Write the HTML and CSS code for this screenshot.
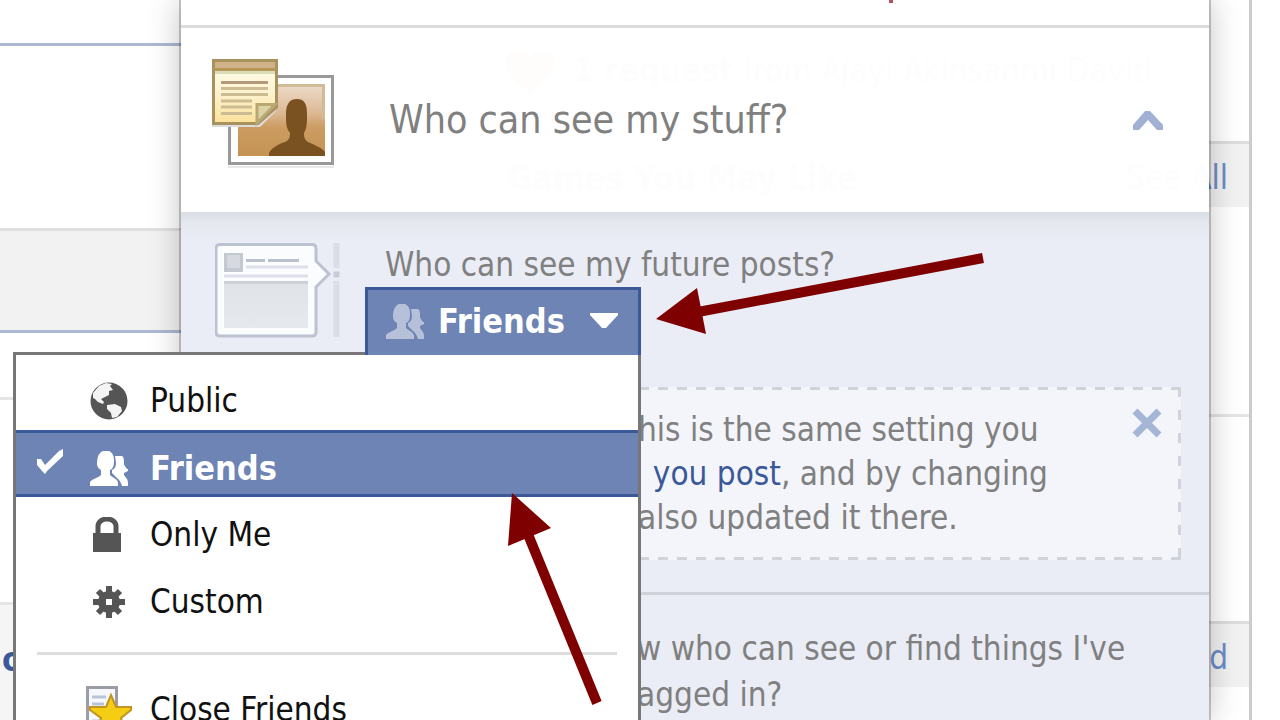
FILE: index.html
```html
<!DOCTYPE html>
<html lang="en">
<head>
  <meta charset="UTF-8" />
  <title>Privacy Shortcuts</title>
  <link rel="stylesheet" href="styles.css">
</head>
<body>
  <svg class="sprite" aria-hidden="true">
    <symbol id="people" viewBox="0 0 38 38">
      <path d="M0 37v-4c2-3 8-4 11-7v-5c-2-1-4-3-4-6 0-8 2-11 6-13h6c4 2 5 5 5 10 0 5-1 8-4 9v5c3 3 8 4 8 8v3z"/>
      <path d="M25 7h7c2 1 2 4 2 8 0 2 2 3 3 5h1v2l-4 2v2c2 3 4 4 4 8v3h-6c-1-3-2-6-5-8l-5-5v-3c3-1 4-4 4-7z"/>
    </symbol>
  </svg>

  <div class="page">
    <div class="left-col">
      <div class="box box-input"></div>
      <div class="box box-blank"></div>
      <div class="box box-bar"></div>
      <div class="box box-gap"></div>
      <div class="box box-story"></div>
      <div class="box box-link"><a href="#">o</a></div>
    </div>
    <div class="right-col">
      <div class="request">
        <svg class="heart" viewBox="0 0 50 44"><path d="M25 44C10 32 0 24 0 13 0 2 17-4 25 8 33-4 50 2 50 13c0 11-10 19-25 31z" fill="#f0a070"/></svg>
        <span><b>1 request</b> from Ajayi Akinsanmi David</span>
      </div>
      <div class="rail-head"><b>Games You May Like</b><a href="#">See All</a></div>
      <div class="rail-item"></div>
      <div class="rail-item"></div>
      <div class="rail-head"><b></b><a href="#">Find</a></div>
    </div>
  </div>

  <div class="panel">
    <div class="panel-top"><span class="alert-mark"></span></div>

    <div class="panel-head">
      <svg class="stuff-icon" viewBox="0 0 122 110">
        <defs>
          <linearGradient id="photo" x1="0" y1="0" x2="0" y2="1">
            <stop offset="0" stop-color="#eedccb"/><stop offset=".4" stop-color="#dcb995"/><stop offset=".6" stop-color="#cc9c62"/><stop offset="1" stop-color="#c49353"/>
          </linearGradient>
          <linearGradient id="paper" x1="0" y1="0" x2="0" y2="1">
            <stop offset="0" stop-color="#fffef0"/><stop offset=".5" stop-color="#fdf3cf"/><stop offset="1" stop-color="#fbe29a"/>
          </linearGradient>
        </defs>
        <rect x="16" y="107" width="106" height="2" fill="#e8e8e8"/>
        <rect x="17.500" y="17.500" width="103" height="87" fill="#fff" stroke="#999" stroke-width="3"/>
        <rect x="26" y="25" width="87" height="72" fill="url(#photo)"/>
        <path d="M26 26.500h85.500V60" fill="none" stroke="#d0bd98" stroke-width="3"/>
        <path d="M57 97v-3c2-5 10-9 16-11 4-2 5-4 5-9-4-5-4-10-4-19 0-9 3-15 11-15s10 6 10 15c0 9 0 14-3 19 0 5 1 7 4 9 7 3 14 6 17 10v4z" fill="#7a5120"/>
        <path d="M0 66h46l18-17v3L48 68H0z" fill="#ddd"/>
        <path d="M1.500 1.500h63V48L46 64.500H1.500z" fill="url(#paper)" stroke="#a8935f" stroke-width="3"/>
        <rect x="3" y="3" width="60" height="6" fill="#d0b189"/>
        <rect x="3" y="9" width="60" height="3" fill="#b59a55"/>
        <rect x="3" y="12" width="60" height="3" fill="#dcdcb8"/>
        <rect x="9" y="22" width="47" height="3" fill="#b5977c"/>
        <path d="M9 29.500h47M9 35.500h47M9 42h31M9 48h31M9 54.500h31" stroke="#cdbb94" stroke-width="3"/>
        <path d="M45 64V45.500h18z" fill="#ddd2a4" stroke="#b9a873" stroke-width="3"/>
      </svg>
      <h2>Who can see my stuff?</h2>
      <button class="icon-btn" aria-label="Collapse">
        <svg width="30" height="20" viewBox="0 0 30 20"><path d="M0 20v-5L12 1h5l13 14v5h-6l-9-10-9 10z" fill="#a1b1d3"/></svg>
      </button>
    </div>

    <div class="setting setting-posts">
      <svg class="post-icon" viewBox="0 0 125 95">
        <defs>
          <linearGradient id="shot" x1="0" y1="0" x2="0" y2="1">
            <stop offset="0" stop-color="#dfe2e7"/><stop offset="1" stop-color="#e6e9ee"/>
          </linearGradient>
        </defs>
        <path d="M5 1.500h92q4 0 4 4V18l13 13-13 13v45q0 4-4 4H5q-4 0-4-4V5.500q0-4 4-4z" fill="#fbfcfe" stroke="#bcc2d0" stroke-width="3"/>
        <rect x="9" y="10" width="19" height="19" fill="#c3c8d1"/>
        <rect x="12" y="12" width="13" height="13" fill="#d6dae0"/>
        <path d="M31 17.500h19M53 17.500h31" stroke="#bcc2cd" stroke-width="3"/>
        <path d="M31 24h62M9 33h84" stroke="#dde0e8" stroke-width="3"/>
        <rect x="9" y="38" width="84" height="47" fill="url(#shot)"/>
        <path d="M9 39.500h84" stroke="#cdd0d6" stroke-width="3"/>
        <path d="M121.500 0v25M121.500 38v56" stroke="#dadee8" stroke-width="6"/>
        <path d="M121.500 28.500v6" stroke="#c8ccd6" stroke-width="6"/>
      </svg>
      <div class="setting-body">
        <p class="question">Who can see my future posts?</p>

        <div class="dropdown">
          <button class="dropdown-btn" aria-haspopup="true" aria-expanded="true">
            <svg class="people" width="38" height="38"><use href="#people"/></svg>
            <span>Friends</span>
            <svg class="caret" width="28" height="16" viewBox="0 0 28 16"><path d="M0 0h28v2L16 15h-4L0 2z"/></svg>
          </button>
          <ul class="menu">
            <li>
              <button>
                <span class="check"></span>
                <span class="icon"><svg width="38" height="38" viewBox="0 0 38 38">
                  <circle cx="19" cy="19" r="18.500" fill="#555"/>
                  <path d="M9 4l7-3 6 1-2 2 3 4-4 1 0 4-4 2-4 2 3 3-1 2-5-2-3-3-2-1 0-5z" fill="#f4f4f4"/>
                  <path d="M17 23l8-1 6 3 1 4-5 6-5 1-1-5-4-4z" fill="#f4f4f4"/>
                </svg></span>
                <span>Public</span>
              </button>
            </li>
            <li class="selected">
              <button>
                <span class="check"><svg width="26" height="26" viewBox="0 0 26 26"><path d="M0 10h4l4 6L22 2l4-2v7L10 22l-2 3-3-3-5-6z" fill="#fff"/></svg></span>
                <span class="icon"><svg width="38" height="38" fill="#fff"><use href="#people"/></svg></span>
                <span>Friends</span>
              </button>
            </li>
            <li>
              <button>
                <span class="check"></span>
                <span class="icon"><svg width="34" height="36" viewBox="0 0 34 36">
                  <path d="M1 16h28v19H1z" fill="#555"/><path d="M6 17V9c0-4 4-7 9-7s9 3 9 7v8" fill="none" stroke="#555" stroke-width="5"/>
                </svg></span>
                <span>Only Me</span>
              </button>
            </li>
            <li>
              <button>
                <span class="check"></span>
                <span class="icon"><svg width="32" height="32" viewBox="0 0 32 32">
                  <path d="M16 0v32M0 16h32M5 5l22 22M27 5L5 27" stroke="#555" stroke-width="6"/><circle cx="16" cy="16" r="11" fill="#555"/><rect x="13" y="13" width="6" height="6" fill="#fff"/>
                </svg></span>
                <span>Custom</span>
              </button>
            </li>
            <li class="divider"></li>
            <li>
              <button>
                <span class="check"></span>
                <span class="icon"><svg width="46" height="48" viewBox="0 0 46 48">
                  <path d="M1.500 1.500h29v44h-29z" fill="#f7f8fb" stroke="#9a9da5" stroke-width="3"/>
                  <path d="M6 11h14M6 18h12M6 35h8" stroke="#b9c3da" stroke-width="3"/>
                  <path d="M25 9l5 12h15v3L35 32l5 15-15-9-14 9 4-15L4 24v-3h16z" fill="#f5cd12" stroke="#c29420" stroke-width="2"/>
                </svg></span>
                <span>Close Friends</span>
              </button>
            </li>
          </ul>
        </div>

        <div class="note">
          <p>his is the same setting you<br>&ensp;<a href="#">you post</a>, and by changing<br>also updated it there.</p>
          <button class="icon-btn" aria-label="Dismiss">
            <svg width="30" height="30" viewBox="0 0 30 30"><path d="M3 3l24 24M27 3L3 27" stroke="#a5b5d5" stroke-width="7"/></svg>
          </button>
        </div>
      </div>
    </div>

    <div class="setting setting-review">
      <p>w who can see or find things I've<br>agged in?</p>
    </div>
  </div>

  <svg class="arrows" aria-hidden="true">
    <g fill="#7f0000" stroke="#7f0000">
      <path d="M656 319L697 288 706 334z" stroke="none"/>
      <path d="M698 312L983 258" stroke-width="10"/>
      <path d="M512 493L551 528 508 546z" stroke="none"/>
      <path d="M527 532L597 703" stroke-width="10"/>
    </g>
  </svg>
</body>
</html>
```
FILE: styles.css
```css
* {
  box-sizing: border-box;
}

html, body {
  height: 100%;
  margin: 0;
}

body {
  position: relative;
  overflow: hidden;
  background: #fff;
  color: #808080;
  font-family: "DejaVu Sans Condensed", "DejaVu Sans", sans-serif;
  font-size: 33px;
  line-height: 44px;
}

h2, p, ul {
  margin: 0;
  padding: 0;
  font-weight: normal;
}

a {
  color: #3b5998;
  text-decoration: none;
}

button {
  border: none;
  background: none;
  padding: 0;
  font: inherit;
  color: inherit;
  cursor: pointer;
}

svg {
  display: block;
  flex-shrink: 0;
}

.sprite {
  position: absolute;
  width: 0;
  height: 0;
}

/* Page behind the panel */
.page {
  display: grid;
  grid-template-columns: 407px 1fr;
  min-height: 100%;
  padding-right: 28px;
}

.box {
  border-bottom: 3px solid #e5e5e5;
}

.box-input {
  height: 46px;
  border-color: #adb9d3;
}

.box-blank {
  height: 185px;
  border-color: #e0e0e0;
}

.box-bar {
  height: 102px;
  background: #f2f2f2;
  border-color: #adb9d3;
}

.box-gap {
  height: 67px;
}

.box-story {
  height: 205px;
}

.box-link {
  height: 140px;
  padding: 31px 2px;
  background: #f5f5f5;
  font-size: 34px;
  font-weight: bold;
  line-height: 46px;
}

.right-col {
  border-right: 3px solid #ccc;
}

.request {
  display: flex;
  align-items: center;
  gap: 18px;
  height: 141px;
  padding-left: 98px;
  color: #888;
  white-space: nowrap;
}

.heart {
  width: 50px;
  height: 44px;
}

.rail-head {
  display: flex;
  align-items: center;
  justify-content: space-between;
  height: 66px;
  padding: 4px 21px 0 100px;
  background: #f2f2f2;
  border-top: 3px solid #ddd;
  color: #888;
}

.rail-head b {
  font-size: 34px;
}

.rail-head a {
  color: #6d8bc8;
}

.rail-item {
  height: 207px;
}

.rail-item + .rail-item {
  border-top: 3px solid #e5e5e5;
}

/* Privacy panel */
.panel {
  position: absolute;
  top: 0;
  right: 71px;
  bottom: 0;
  left: 181px;
  display: flex;
  flex-direction: column;
  box-shadow: 0 0 0 2px rgba(0, 0, 0, 0.2), 0 0 30px rgba(0, 0, 0, 0.25);
}

.panel-top,
.panel-head {
  background: rgba(255, 255, 255, 0.98);
}

.panel-top {
  display: flex;
  justify-content: flex-end;
  height: 28px;
  padding-right: 316px;
  border-bottom: 3px solid #dcdcdc;
}

.alert-mark {
  width: 4px;
  height: 3px;
  background: #b5525c;
}

.panel-head {
  display: flex;
  align-items: center;
  height: 184px;
  padding: 0 46px 0 31px;
}

.stuff-icon {
  width: 122px;
  height: 110px;
  margin-bottom: 12px;
}

.panel-head h2 {
  flex: 1;
  margin-left: 55px;
  font-size: 39px;
}

.setting {
  background: #eaedf5;
}

.setting-posts {
  display: flex;
  gap: 25px;
  padding: 31px 28px 32px 34px;
  background: linear-gradient(#dadee5, #e5e8ef 12px, #eaedf5 30px);
  border-bottom: 3px solid #cfd2d8;
}

.post-icon {
  width: 125px;
  height: 95px;
}

.setting-body {
  flex: 1;
}

.question {
  padding-left: 20px;
}

.setting-review {
  flex: 1;
  padding: 31px 28px 0 456px;
  line-height: 46px;
  white-space: nowrap;
}

/* Audience dropdown */
.dropdown {
  position: relative;
  width: 276px;
}

.dropdown-btn {
  position: relative;
  z-index: 2;
  display: flex;
  align-items: center;
  width: 100%;
  height: 68px;
  padding: 0 20px 4px 18px;
  background: #6d84b4;
  border: 3px solid #3b5998;
  border-bottom: none;
  color: #fff;
  font-size: 34px;
  font-weight: bold;
}

.people {
  margin-right: 14px;
  fill: #b6c1d9;
}

.caret {
  margin-left: auto;
  fill: #fff;
}

.menu {
  position: absolute;
  z-index: 1;
  top: 65px;
  right: 0;
  width: 628px;
  padding: 8px 0;
  background: #fff;
  border: 3px solid #777;
  color: #111;
  list-style: none;
}

.menu button {
  display: flex;
  align-items: center;
  width: 100%;
  height: 67px;
  padding: 8px 21px 0;
  border: solid transparent;
  border-width: 3px 0;
}

.menu .selected button {
  background: #6d84b4;
  border-color: #3b5998;
  color: #fff;
  font-size: 34px;
  font-weight: bold;
}

.check {
  width: 26px;
  height: 38px;
}

.icon {
  display: flex;
  justify-content: center;
  width: 46px;
  margin: 0 18px 0 23px;
}

.divider {
  height: 3px;
  margin: 21px 21px 17px;
  background: #ddd;
}

/* Wide dashes on all four sides, longer on the vertical ones */
.note {
  --dash: #d0d3da 0 10px, transparent 10px;
  display: flex;
  align-items: flex-start;
  justify-content: space-between;
  margin-top: 32px;
  padding: 21px 19px 20px 273px;
  background:
    repeating-linear-gradient(to left, var(--dash) 19px) top / 100% 3px no-repeat,
    repeating-linear-gradient(to left, var(--dash) 19px) bottom / 100% 3px no-repeat,
    repeating-linear-gradient(var(--dash) 23px) left / 3px 100% no-repeat,
    repeating-linear-gradient(var(--dash) 23px) right / 3px 100% no-repeat,
    #f3f5fa;
  white-space: nowrap;
}

/* Callout arrows */
.arrows {
  position: absolute;
  z-index: 3;
  top: 0;
  left: 0;
  width: 100%;
  height: 100%;
  pointer-events: none;
}
```
